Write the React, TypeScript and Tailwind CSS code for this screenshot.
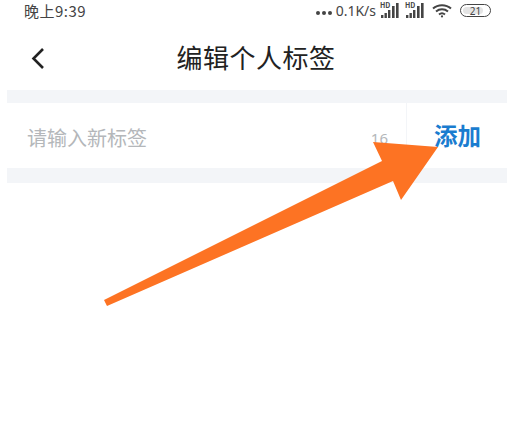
const cjk = "font-['Noto_Sans_CJK_SC','Noto_Sans',sans-serif]";

const SignalIcon = () => (
  <span className="relative block h-[15px] w-[19px]">
    <span className="absolute -top-[1px] left-0 text-[7px] font-bold leading-[7px] text-[#444]">HD</span>
    <svg className="absolute bottom-0 left-0" width="19" height="15" viewBox="0 0 19 15" fill="#444">
      <rect x="1" y="12" width="2.4" height="3" />
      <rect x="4.5" y="10" width="2.4" height="5" />
      <rect x="8" y="7" width="2.4" height="8" />
      <rect x="12" y="3" width="2.6" height="12" />
      <rect x="16" y="0" width="2.6" height="15" />
    </svg>
  </span>
);

const StatusBar = () => (
  <div className="flex h-[21px] items-center justify-between pl-6 pr-[19px] text-[#444]">
    <span className={`${cjk} text-[15px] leading-none tracking-[0.5px]`}>晚上9:39</span>
    <div className="flex items-center">
      <span className="mr-[4px] mt-[5px] flex gap-[2px]">
        <i className="block size-[4px] rounded-full bg-[#444]" />
        <i className="block size-[4px] rounded-full bg-[#444]" />
        <i className="block size-[4px] rounded-full bg-[#444]" />
      </span>
      <span className="font-['Noto_Sans',sans-serif] text-[14px] leading-none">0.1K/s</span>
      <span className="ml-[4px]">
        <SignalIcon />
      </span>
      <span className="ml-[6px]">
        <SignalIcon />
      </span>
      <svg className="ml-[8px]" width="20" height="15" viewBox="0 0 20 15" fill="none" stroke="#444" strokeWidth="2">
        <path d="M1 5.5C6 1 14 1 19 5.5" />
        <path d="M4 8.6C7.5 5.6 12.5 5.6 16 8.6" />
        <path d="M7 11.5C8.8 10 11.2 10 13 11.5" />
        <circle cx="10" cy="13.4" r="1.1" fill="#444" stroke="none" />
      </svg>
      <span className="relative ml-2 flex h-[13px] w-[31px] items-center justify-center overflow-hidden rounded-[7px] border border-[#444] font-['Noto_Sans',sans-serif] text-[10px] leading-none">
        <i className="absolute inset-y-[2px] left-[2px] w-[20px] rounded-[4px] bg-[#e4e4e4]" />
        <span className="relative">21</span>
      </span>
    </div>
  </div>
);

const OverlayArrow = () => (
  <svg className="absolute left-0 top-0" width="510" height="437" viewBox="0 0 510 437">
    <polygon
      points="104,300 382,161 373,142 438,147 401,200 393,181 107,306"
      fill="#fd7323"
    />
  </svg>
);

export default function App() {
  return (
    <div className={`relative h-[437px] w-[510px] overflow-hidden bg-white ${cjk}`}>
      <StatusBar />

      <div className="relative flex h-[69px] items-center justify-center pl-[2px] pt-[3px]">
        <svg className="absolute left-[30px] top-[26px]" width="16" height="23" viewBox="0 0 16 23" fill="none" stroke="#222" strokeWidth="2.6">
          <path d="M13 2L3.5 11.5L13 21" />
        </svg>
        <h1 className="text-[26px] font-normal leading-none tracking-[0.5px] text-[#222]">编辑个人标签</h1>
      </div>

      <div className="ml-[7px] mr-[3px] h-[13px] bg-[#f3f5f8]" />
      <div className="ml-[7px] mr-[3px] flex h-[65px] items-center">
        <span className="flex-1 pl-5 pt-[5px] text-[20px] leading-none text-[#b4b7ba]">请输入新标签</span>
        <span className="mr-[18px] mt-[5px] font-['Noto_Sans',sans-serif] text-[15px] leading-none text-[#b4b7ba]">16</span>
        <div className="flex h-full w-[101px] items-center border-l border-[#f3f5f8] pl-[27px] pt-[1px]">
          <span className="text-[23.5px] font-bold leading-none text-[#1a7ccf]">添加</span>
        </div>
      </div>
      <div className="ml-[7px] mr-[3px] h-[15px] bg-[#f3f5f8]" />

      <OverlayArrow />
    </div>
  );
}
